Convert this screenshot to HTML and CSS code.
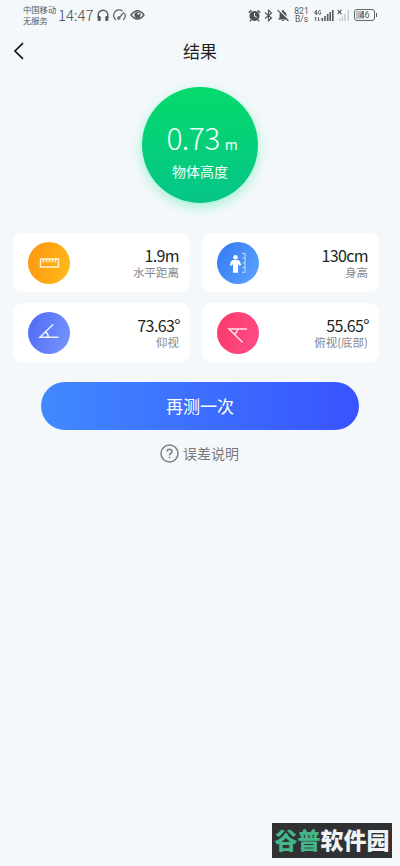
FILE: index.html
```html
<!DOCTYPE html>
<html lang="zh-CN">
<head>
<meta charset="utf-8">
<title>结果</title>
<link rel="stylesheet" href="styles.css">
</head>
<body>
<div class="status">
  <div class="carrier"><span>中国移动</span><span>无服务</span></div>
  <span class="clock">14:47</span>
  <svg class="headphones" width="12" height="13" viewBox="0 0 12 13"><path d="M1.2 9V6a4.8 4.8 0 0 1 9.6 0v3" fill="none" stroke="#55585b" stroke-width="1.4"/><rect x=".7" y="7" width="3" height="5" rx="1" fill="#55585b"/><rect x="8.3" y="7" width="3" height="5" rx="1" fill="#55585b"/></svg>
  <svg class="gauge" width="13" height="13" viewBox="0 0 13 13" fill="none" stroke="#606366" stroke-width="1.3"><path d="M3 11A5.3 5.3 0 0 1 9.4 1.9M11.5 4.3a5.3 5.3 0 0 1-1.3 6.6M6 9l4.8-5.6"/><circle cx="5.8" cy="9" r="1.1"/></svg>
  <svg class="eye" width="15" height="12" viewBox="0 0 15 12"><path d="M1 6q6.5-8.5 13 0Q7.500 14 1 6Z" fill="none" stroke="#55585b" stroke-width="1.4"/><circle cx="7.500" cy="6" r="3.100" fill="#55585b"/><circle cx="8.300" cy="4.800" r="1" fill="#f4f8fb"/></svg>
  <div class="indicators">
    <svg class="alarm" width="13" height="13" viewBox="0 0 13 13"><circle cx="6.500" cy="7" r="5" fill="#4d5053"/><path d="M.8 3.800 3.500 1.400M12.200 3.800 9.500 1.400M3 11l-1 1.300M10 11l1 1.300" stroke="#4d5053" stroke-width="1.500"/><path d="M6.500 4v3.300l2.300 1" fill="none" stroke="#f4f8fb"/></svg>
    <svg class="bluetooth" width="9" height="13" viewBox="0 0 9 13"><path d="M1 3.500 7.500 9 4.500 11.800V1.200L7.500 4 1 9.500" fill="none" stroke="#55585b" stroke-width="1.200"/></svg>
    <svg class="bell" width="12" height="13" viewBox="0 0 12 13"><path d="M1 10.500 2.500 8.500V5.500Q2.800 3 5 2.500V1.200h2v1.300Q9.200 3 9.500 5.500v3l1.500 2ZM4.500 11h3q-1.500 2-3 0" fill="#4d5053"/><path d="m1.300 .5 11 10.500" stroke="#f4f8fb" stroke-width="1.200"/><path d="m.5 1.200 11 10.800" stroke="#4d5053" stroke-width="1.100"/></svg>
    <div class="speed"><span>821</span><span>B/s</span></div>
    <svg class="signal" width="20" height="13" viewBox="0 0 20 13"><g fill="#55585b"><path d="M7.500 9h1.600v3H7.500zM10.200 7h1.600v5h-1.600zM12.900 5h1.600v7h-1.600zM15.400 3h1.600v9h-1.600zM18 1h1.600v11H18z"/></g><path d="M2.500 6V1L.7 4.300h2.800M6.800 1.700Q4.500.5 4.500 3.500T6.700 5V3.600h-1M1.800 8v4M.5 9.300 1.800 8M4.500 8v4l1.300-1.300" fill="none" stroke="#55585b" stroke-width=".9"/></svg>
    <svg class="nosignal" width="13" height="13" viewBox="0 0 13 13"><path d="M2 9.500h1.500V12H2zM4.600 7.500h1.500V12H4.600zM7.200 5h1.500v7H7.200zM10.500 1H12v11h-1.500z" fill="#c9ccce"/><path d="m.7 1 3.800 4m0-4L.7 5" stroke="#606366" stroke-width="1.100"/></svg>
    <div class="battery"><span>46</span></div>
  </div>
</div>
<header class="nav">
  <svg width="12" height="18" viewBox="0 0 12 18"><path d="M10 1.200 2 9l8 7.800" fill="none" stroke="#15181a" stroke-width="1.700"/></svg>
  <h1>结果</h1>
</header>
<main>
  <section class="result">
    <div class="measure"><span class="number">0.73</span><span class="unit">m</span></div>
    <div class="caption">物体高度</div>
  </section>
  <section class="cards">
    <article class="card">
      <div class="badge orange"><svg width="42" height="42" viewBox="0 0 42 42" fill="none" stroke="#fff3d5" stroke-width="1.500"><path d="M12.500 17h18v8h-18zM15.500 17v3.500M18.500 17v3.500M21.500 17v3.500M24.500 17v3.500M27.500 17v3.500"/></svg></div>
      <div class="data"><b>1.9m</b><span>水平距离</span></div>
    </article>
    <article class="card right">
      <div class="badge blue"><svg width="42" height="42" viewBox="0 0 42 42"><circle cx="18.500" cy="15.300" r="2.300" fill="#fff"/><path d="M15.500 18h6q2 1 2.600 5l-1.400 1-1.700-2v8.800h-5V22l-1.700 2-1.500-1q.7-4 2.700-5" fill="#fff"/><path d="M28 11v19.500M25 11.300h3M25.600 16h2.400M25.600 21h2.400M25.600 25.500h2.400M25 30.300h3" fill="none" stroke="#c6e2ff"/></svg></div>
      <div class="data"><b>130cm</b><span>身高</span></div>
    </article>
    <article class="card">
      <div class="badge indigo"><svg width="42" height="42" viewBox="0 0 42 42" fill="none" stroke="#edf1ff" stroke-width="1.500"><path d="M25.300 12.300 12 25.200h18.500M17.300 20q3 1.500 3 5"/></svg></div>
      <div class="data"><b>73.63<i>°</i></b><span>仰视</span></div>
    </article>
    <article class="card right">
      <div class="badge pink"><svg width="42" height="42" viewBox="0 0 42 42" fill="none" stroke="#ffe4ee" stroke-width="1.500"><path d="M30 17H12l13.500 13.300M20.500 17q0 3.500-3.500 5"/></svg></div>
      <div class="data"><b>55.65<i>°</i></b><span>俯视(底部)</span></div>
    </article>
  </section>
  <button class="again">再测一次</button>
  <div class="help"><svg width="19" height="19" viewBox="0 0 19 19" fill="none" stroke="#7c7e80" stroke-width="1.500"><circle cx="9.500" cy="9.500" r="8.500"/><path d="M7 7.500q.2-2.300 2.500-2.300T12 7.400q0 1.300-1.500 2.100-1 .6-1 2"/><path d="M9.500 12.700v1.500"/></svg><span>误差说明</span></div>
</main>
<div class="watermark"><span>谷普</span>软件园</div>
</body>
</html>
```
FILE: styles.css
```css
* { box-sizing: border-box; }
body { margin: 0; width: 400px; height: 866px; position: relative; overflow: hidden; background: #f4f8fb; color: #1d1f21; font-family: "Noto Sans CJK SC", sans-serif; }
svg { display: block; flex: none; }
.status { height: 30px; padding-left: 23px; display: flex; align-items: center; color: #55585b; }
.carrier { width: 35px; display: flex; flex-direction: column; font-size: 8.3px; line-height: 11px; white-space: nowrap; padding-bottom: 1px; }
.clock { width: 39px; font: 300 15px/18px "Noto Sans CJK SC", sans-serif; letter-spacing: -.1px; color: #45484b; }
.gauge { margin-left: 4px; }
.eye { margin-left: 4px; }
.indicators { display: flex; align-items: center; margin-left: auto; padding-right: 25px; }
.bluetooth { margin-left: 3px; }
.bell { margin-left: 4px; }
.speed { display: flex; flex-direction: column; align-items: center; width: 15px; margin-left: 5px; font: 8.5px/8px Roboto, sans-serif; }
.signal { margin-left: 5px; }
.nosignal { margin-left: 3px; }
.battery { position: relative; width: 21px; height: 12px; margin-left: 4px; border: 1px solid #65686b; border-radius: 3px; display: flex; align-items: center; justify-content: center; font: 9px/9px Roboto, sans-serif; background: linear-gradient(90deg, #b9bdc0 45%, transparent 45%) content-box; padding: 1px; }
.battery::after { content: ""; position: absolute; right: -3px; top: 3px; width: 1px; height: 4px; background: #55585b; }
.nav { height: 42px; padding: 0 13px; display: grid; grid-template-columns: 12px 1fr 12px; align-items: center; }
.nav h1 { margin: 0; text-align: center; font-size: 17px; line-height: 24px; font-weight: 400; }
.result { width: 116px; height: 116px; margin: 15px auto 0; padding-top: 31px; border-radius: 50%; background: linear-gradient(#04da6b, #06c588); box-shadow: 0 4px 12px #78f0bbaa; color: #f3fff9; text-align: center; }
.measure { display: flex; align-items: baseline; justify-content: center; gap: 5px; height: 40px; line-height: 38px; padding-left: 4px; }
.number { font-size: 30px; font-weight: 300; letter-spacing: -.6px; }
.unit { font-size: 14px; }
.caption { font-size: 14px; line-height: 26px; }
.cards { margin: 30px 21px 0 13px; display: grid; grid-template-columns: 177px 177px; gap: 11px 12px; }
.card { height: 59px; border-radius: 9px; background: #fff; padding: 0 11px 0 15px; display: flex; align-items: center; justify-content: space-between; }
.badge { width: 42px; height: 42px; border-radius: 50%; }
.orange { background: linear-gradient(110deg, #ff9312, #ffbd18); }
.blue { background: linear-gradient(120deg, #3179f2, #5ea4ff); }
.indigo { background: linear-gradient(110deg, #4e69f5, #7896ff); }
.pink { background: linear-gradient(110deg, #f93969, #ff4e88); }
.data { display: flex; flex-direction: column; align-items: flex-end; padding-top: 1px; }
.data b { font-weight: 400; font-size: 16px; line-height: 18px; letter-spacing: -.6px; }
.data i { font-style: normal; font-size: 17px; line-height: 1px; margin-right: -1px; }
.data span { color: #85888a; font-size: 11.5px; line-height: 17px; }
.again { display: block; width: 318px; height: 48px; margin: 20px 0 0 41px; padding: 0; border: 0; border-radius: 24px; background: linear-gradient(90deg, #4189ff, #3853ff); color: #fff; font: 17px/24px "Noto Sans CJK SC", sans-serif; }
.help { display: flex; align-items: center; justify-content: center; gap: 4px; height: 20px; margin-top: 13px; font-size: 14px; line-height: 20px; color: #77797b; padding-right: 1px; }
.watermark { position: absolute; left: 272px; top: 823px; width: 120px; height: 35px; background: #303133; color: #f2f2f2; font-size: 23px; line-height: 33px; font-weight: 900; text-align: center; white-space: nowrap; }
.watermark span { color: #45b68b; }
```
